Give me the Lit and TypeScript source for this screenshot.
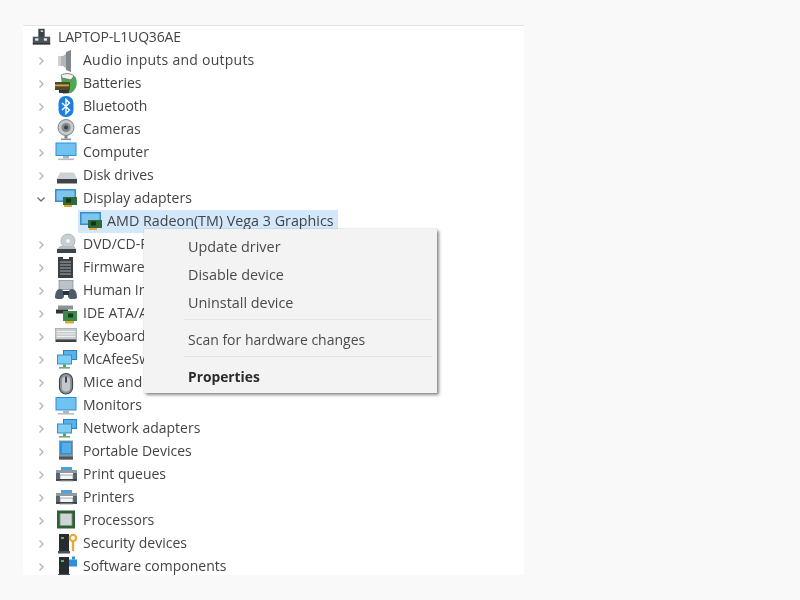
import { LitElement, html, css, svg } from "lit";
import { customElement } from "lit/decorators.js";

const monitor = (top: number) => svg`
  <rect x="1.5" y=${top} width="21" height="13.5" fill="#2f8fd8"/>
  <rect x="2.5" y=${top + 1} width="19" height="11.5" fill="#70c2f0"/>
  <rect x="9" y=${top + 13.5} width="6" height="2.5" fill="#aab6be"/>
  <rect x="4" y=${top + 16} width="16" height="1.6" fill="#b4bec6"/>`;

const adapter = svg`
  <rect x="1" y="2" width="21" height="13" fill="#3b8bc4"/>
  <rect x="2.5" y="3.5" width="18" height="10" fill="#7cc6ee"/>
  <rect x="9" y="10" width="14" height="8" fill="#2f6b3a"/>
  <rect x="12" y="11.5" width="5" height="4" fill="#16341c"/>
  <rect x="10" y="18" width="8" height="2" fill="#e0a92e"/>`;

const printer = svg`
  <rect x="7" y="4" width="11" height="3" fill="#4aa3df"/>
  <rect x="2" y="7" width="21" height="3" fill="#8d99a3"/>
  <rect x="2" y="10" width="4" height="8" fill="#59636b"/>
  <rect x="19" y="10" width="4" height="8" fill="#59636b"/>
  <rect x="6" y="12" width="13" height="6" fill="#f4f4f4" stroke="#7d8790" stroke-width=".7"/>
  <rect x="2" y="16" width="21" height="1.6" fill="#39424a"/>`;

const tower = (extra: unknown) => svg`
  <rect x="5" y="2" width="10" height="17" fill="#262c30"/>
  <rect x="7" y="5" width="3" height="2" fill="#57b65c"/>
  <rect x="4" y="19" width="12" height="2.5" fill="#4b5358"/>${extra}`;

const network = svg`
  <rect x="9" y="2" width="14" height="10" fill="#2f7fc4"/>
  <rect x="10" y="3" width="12" height="8" fill="#5bb0e6"/>
  <rect x="3" y="6.5" width="15" height="10" fill="#2f8fd8"/>
  <rect x="4" y="7.5" width="13" height="8" fill="#7fcdf3"/>
  <rect x="9" y="16.5" width="3" height="2.5" fill="#5a9a5c"/>
  <rect x="5" y="19" width="11" height="1.6" fill="#6fae6c"/>`;

const icons: Record<string, unknown> = {
  root: svg`
    <rect x="8" y="1" width="8" height="11" fill="#3a4248"/>
    <rect x="11" y="3" width="3" height="2" fill="#d8dde0"/>
    <rect x="1" y="11" width="22" height="9" fill="#4a5359"/>
    <rect x="4" y="13" width="4" height="3" fill="#e8ecee"/>
    <rect x="15" y="13" width="4" height="3" fill="#e8ecee"/>
    <rect x="1" y="19" width="22" height="2" fill="#2a3035"/>`,
  audio: svg`
    <path d="M4 7h5l8-6v22l-8-6H4z" fill="#b0b7bb"/>
    <path d="M12 3l5-2v22l-5-2z" fill="#7f888d"/>
    <rect x="4" y="7" width="3" height="10" fill="#ccd1d4"/>`,
  battery: svg`
    <path d="M7 5c4-4 12-4 15 1 2 6 0 12-5 15l-8 1z" fill="#4fa853"/>
    <path d="M7 3c4-2 10-2 13 1l-3 4-9-2z" fill="#eef3ef" stroke="#5f6b60" stroke-width=".8"/>
    <rect x="1" y="10" width="15" height="8" fill="#4e4a2c"/>
    <rect x="1" y="12.5" width="14" height="1.8" fill="#d6a83a"/>
    <rect x="5" y="18" width="10" height="3" fill="#343434"/>`,
  bluetooth: svg`
    <rect x="4.5" y="1" width="15" height="21" rx="7" fill="#1d7fe0"/>
    <path d="M8 8l7.5 7-3.5 3.5v-14L15.500 8 8 15" fill="none" stroke="#fff" stroke-width="1.4"/>`,
  camera: svg`
    <circle cx="12" cy="9.500" r="8" fill="#c5cacd" stroke="#7d868b" stroke-width="1"/>
    <circle cx="12" cy="9.500" r="4.500" fill="#80878b"/>
    <circle cx="12" cy="9.500" r="2" fill="#3c4145"/>
    <rect x="10.500" y="17.500" width="3" height="3" fill="#7a8287"/>
    <rect x="7" y="20.500" width="10" height="1.600" fill="#8a9296"/>`,
  computer: monitor(1.5),
  disk: svg`
    <path d="M6 8.500h14l3 6.500H3z" fill="#cdd2d5"/>
    <rect x="3" y="15" width="20" height="4.500" fill="#3d4449"/>`,
  adapter,
  dvd: svg`
    <circle cx="14" cy="8" r="7" fill="#c8ced2" stroke="#9aa2a7" stroke-width=".7"/>
    <circle cx="14" cy="8" r="2" fill="#f2f4f5"/>
    <path d="M6 13h14l2 3H3z" fill="#b8bec2"/>
    <rect x="3" y="16" width="19" height="4" fill="#3d4449"/>`,
  firmware: svg`
    <path d="M4 1h5v2h6V1h4v21H4z" fill="#3a3f42"/>
    <path d="M6 6h11M6 9h11M6 12h11M6 15h11M6 18h11" stroke="#a6adb1" stroke-width="1"/>`,
  human: svg`
    <rect x="5" y="1.500" width="14" height="9" fill="#b9c3cb" stroke="#7f8a92" stroke-width=".7"/>
    <path d="M1 19c0-6 2-9 5-9s4 3 4 8l-2 2H3z" fill="#4d5b6b"/>
    <path d="M23 19c0-6-2-9-5-9s-4 3-4 8l2 2h5z" fill="#4d5b6b"/>
    <rect x="9" y="12" width="6" height="4" fill="#2a3138"/>`,
  ide: svg`
    <rect x="4" y="3.500" width="15" height="4" fill="#8a9297"/>
    <rect x="2" y="7.500" width="12" height="4" fill="#2e3438"/>
    <rect x="9" y="9" width="14" height="10" fill="#3b8a4c"/>
    <rect x="14" y="11.500" width="5" height="4" fill="#173a20"/>
    <rect x="11" y="19" width="9" height="2.500" fill="#e0a92e"/>`,
  keyboard: svg`
    <rect x="1.500" y="3.500" width="21" height="11" fill="#c6cbce" stroke="#8b9398" stroke-width=".6"/>
    <path d="M3 6.500h18M3 9h18M3 11.500h18" stroke="#eef0f1" stroke-width="1"/>
    <rect x="1.500" y="14.500" width="21" height="2.500" fill="#3c4347"/>`,
  network,
  mouse: svg`
    <rect x="5.500" y="2.500" width="13" height="20.500" rx="6.500" fill="#8d969c" stroke="#3e4549" stroke-width="1.200"/>
    <rect x="8" y="5.500" width="8" height="15" rx="4" fill="#c2c8cc"/>
    <rect x="11" y="5.500" width="2" height="6" fill="#3e4549"/>`,
  monitor: monitor(3),
  portable: svg`
    <rect x="5" y="0.500" width="14" height="19" fill="#8f989d"/>
    <rect x="6" y="1.500" width="12" height="13" fill="#2f8fd8"/>
    <rect x="8" y="3" width="9" height="10" fill="#55aee8"/>
    <rect x="5" y="16.500" width="14" height="3" fill="#4f565b"/>`,
  printer,
  processor: svg`
    <rect x="3" y="1.500" width="18" height="18" fill="#2f5f34"/>
    <rect x="6" y="4.500" width="12" height="12" fill="#cfd4d4" stroke="#7b9a7f" stroke-width=".8"/>`,
  security: tower(svg`
    <circle cx="19" cy="6" r="3.200" fill="none" stroke="#e7a93b" stroke-width="2.200"/>
    <rect x="17.800" y="9" width="2.400" height="10" fill="#e7a93b"/>`),
  software: tower(svg`
    <rect x="15" y="4.500" width="8" height="7" fill="#2f8fd8"/>
    <rect x="18" y="1.500" width="3" height="3" fill="#2f8fd8"/>`),
};

const ic = (name: string) =>
  html`<svg class="icon" viewBox="0 0 24 24" width="24" height="24">${icons[name]}</svg>`;

const chevron = (open = false) =>
  html`<svg class="chev" viewBox="0 0 10 10" width="10" height="10">
    <path d=${open ? "M1.500 3.500L5 7l3.500-3.500" : "M3.500 1.500L7 5 3.500 8.500"} fill="none"
      stroke=${open ? "#707070" : "#b4b4b4"} stroke-width="1.300"/>
  </svg>`;

const before = [
  ["battery", "Batteries"],
  ["bluetooth", "Bluetooth"],
  ["camera", "Cameras"],
  ["computer", "Computer"],
  ["disk", "Disk drives"],
];
const after = [
  ["dvd", "DVD/CD-ROM drives"],
  ["firmware", "Firmware"],
  ["human", "Human Interface Devices"],
  ["ide", "IDE ATA/ATAPI controllers"],
  ["keyboard", "Keyboards"],
  ["network", "McAfeeSwSvc"],
  ["mouse", "Mice and other pointing devices"],
  ["monitor", "Monitors"],
  ["network", "Network adapters"],
  ["portable", "Portable Devices"],
  ["printer", "Print queues"],
  ["printer", "Printers"],
  ["processor", "Processors"],
  ["security", "Security devices"],
  ["software", "Software components"],
];

@customElement("app-root")
export class AppRoot extends LitElement {
  static styles = css`
    :host {
      display: block;
      width: 800px;
      height: 600px;
      background: #f9f9f9;
      font-family: "Open Sans", "Noto Sans", sans-serif;
      color: #444;
      overflow: hidden;
    }
    .page {
      padding: 25px 276px 25px 23px;
      height: 600px;
      box-sizing: border-box;
      filter: blur(0.45px);
    }
    .panel {
      position: relative;
      height: 550px;
      background: #fff;
      border-top: 1px solid #e4e4e4;
      box-sizing: border-box;
      overflow: hidden;
    }
    .row {
      display: flex;
      align-items: center;
      height: 23px;
      font-size: 14px;
      white-space: nowrap;
    }
    .row span {
      padding-bottom: 2px;
    }
    .root {
      padding-left: 9px;
      letter-spacing: -0.15px;
    }
    .root .icon {
      width: 19px;
      height: 19px;
      margin-right: 7px;
    }
    .item {
      padding-left: 13px;
    }
    .chev {
      flex: none;
      margin-right: 8px;
    }
    .icon {
      flex: none;
      margin-right: 5px;
    }
    .wide {
      letter-spacing: 0.25px;
    }
    .child {
      margin-left: 55px;
      width: 260px;
      padding-left: 1px;
      box-sizing: border-box;
      background: #d3e9fb;
      font-size: 14.3px;
    }
    .child .icon {
      margin-right: 4px;
    }
    .menu {
      position: absolute;
      left: 121px;
      top: 203px;
      width: 293px;
      height: 164px;
      box-sizing: border-box;
      background: #f3f3f3;
      box-shadow: 2px 2px 3px rgba(0, 0, 0, 0.45), 0 0 1px rgba(0, 0, 0, 0.25);
      padding: 4px 5px 0 40px;
      font-size: 14.4px;
      color: #4a4a4a;
    }
    .mi {
      height: 28px;
      display: flex;
      align-items: center;
      padding: 0 0 2px 4px;
      box-sizing: border-box;
    }
    .sep {
      height: 1px;
      background: #e4e4e4;
      margin: 2px 0 6px;
    }
    .mi.scan {
      font-size: 14px;
    }
    .mi.bold {
      font-weight: 700;
      font-size: 13.8px;
      color: #2b2b2b;
    }
  `;

  render() {
    const row = ([i, t]: string[]) =>
      html`<div class="row item">${chevron()}${ic(i)}<span>${t}</span></div>`;
    return html`<div class="page">
      <div class="panel">
        <div class="row root">${ic("root")}<span>LAPTOP-L1UQ36AE</span></div>
        <div class="row item">${chevron()}${ic("audio")}<span class="wide">Audio inputs and outputs</span></div>
        ${before.map(row)}
        <div class="row item">${chevron(true)}${ic("adapter")}<span>Display adapters</span></div>
        <div class="row child">${ic("adapter")}<span>AMD Radeon(TM) Vega 3 Graphics</span></div>
        ${after.map(row)}
        <div class="menu">
          <div class="mi">Update driver</div>
          <div class="mi">Disable device</div>
          <div class="mi">Uninstall device</div>
          <div class="sep"></div>
          <div class="mi scan">Scan for hardware changes</div>
          <div class="sep"></div>
          <div class="mi bold">Properties</div>
        </div>
      </div>
    </div>`;
  }
}
